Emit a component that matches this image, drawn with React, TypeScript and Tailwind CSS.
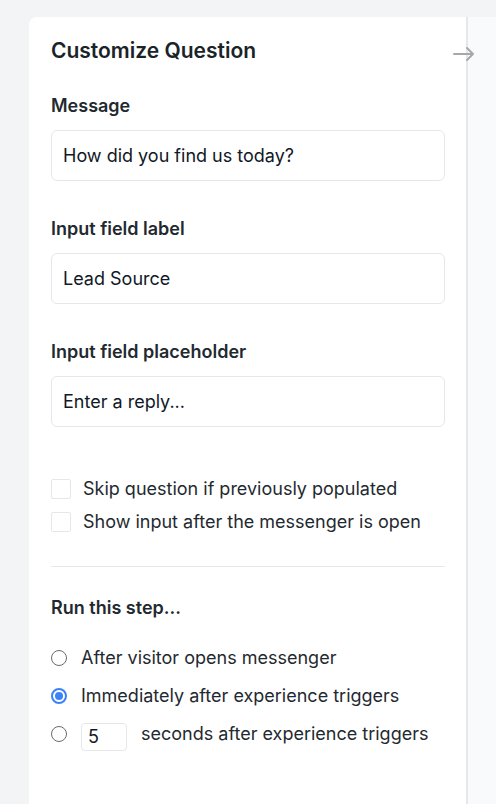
import React from "react";

function Radio({ checked }: { checked?: boolean }) {
  return checked ? (
    <span className="mt-[4px] flex h-[16px] w-[16px] shrink-0 items-center justify-center rounded-full border-2 border-[#3b82f6] bg-white">
      <span className="h-[8px] w-[8px] rounded-full bg-[#3b82f6]" />
    </span>
  ) : (
    <span className="mt-[4px] h-[16px] w-[16px] shrink-0 rounded-full border border-[#6b6b6b] bg-white" />
  );
}

function Field({ label, value, first }: { label: string; value: string; first?: boolean }) {
  return (
    <div className={first ? "mt-[29px]" : "mt-9"}>
      <div className="text-[18px] font-semibold leading-[24px] text-[#1f2a30]">{label}</div>
      <div className="mt-3 flex h-[51px] items-center rounded-md border border-[#e5e7eb] bg-white px-[11px] text-[18px] text-[#111827]">
        {value}
      </div>
    </div>
  );
}

function Check({ label }: { label: string }) {
  return (
    <div className="flex items-center gap-3">
      <span className="h-[20px] w-[20px] shrink-0 rounded-[2px] border border-[#e5e7eb] bg-white" />
      <span className="text-[18px] leading-[24px] text-[#1f2a30]">{label}</span>
    </div>
  );
}

export default function App() {
  return (
    <div className="flex h-[804px] overflow-hidden bg-[#f3f4f6] pl-[29px] pt-[17px] font-['Inter',sans-serif]">
      <div className="relative flex flex-1">
        <div className="w-[437px] shrink-0 rounded-tl-lg bg-white pl-[22px] pr-[21px] pt-[20px]">
          <div className="text-[21px] font-semibold leading-[28px] text-[#1a2328]">Customize Question</div>
          <Field first label="Message" value="How did you find us today?" />
          <Field label="Input field label" value="Lead Source" />
          <Field label="Input field placeholder" value="Enter a reply..." />

          <div className="mt-[50px] flex flex-col gap-[9px]">
            <Check label="Skip question if previously populated" />
            <Check label="Show input after the messenger is open" />
          </div>

          <div className="mt-[32px] h-px bg-[#e5e7eb]" />

          <div className="mt-[29px] text-[18px] font-semibold leading-[24px] text-[#1f2a30]">Run this step...</div>

          <div className="mt-[26px] flex flex-col gap-[14px] text-[18px] leading-[24px] text-[#1f2a30]">
            <div className="flex items-start gap-[14px]">
              <Radio />
              <span>After visitor opens messenger</span>
            </div>
            <div className="flex items-start gap-[14px]">
              <Radio checked />
              <span>Immediately after experience triggers</span>
            </div>
            <div className="flex items-start gap-[14px]">
              <Radio />
              <span className="mt-[1px] flex h-[28px] w-[46px] items-center rounded-[4px] border border-[#e5e7eb] px-[6px] text-[#111827]">5</span>
              <span>seconds after experience triggers</span>
            </div>
          </div>
        </div>
        <div className="flex-1 border-l-2 border-[#e5e7eb] bg-[#f9fafb]" />
        <svg
          className="absolute left-[423px] top-[29px]"
          width="24"
          height="16"
          viewBox="0 0 24 16"
          fill="none"
          stroke="#a3a9ad"
          strokeWidth="2"
          strokeLinecap="round"
          strokeLinejoin="round"
        >
          <path d="M2 8h19M15 2l6 6-6 6" />
        </svg>
      </div>
    </div>
  );
}
